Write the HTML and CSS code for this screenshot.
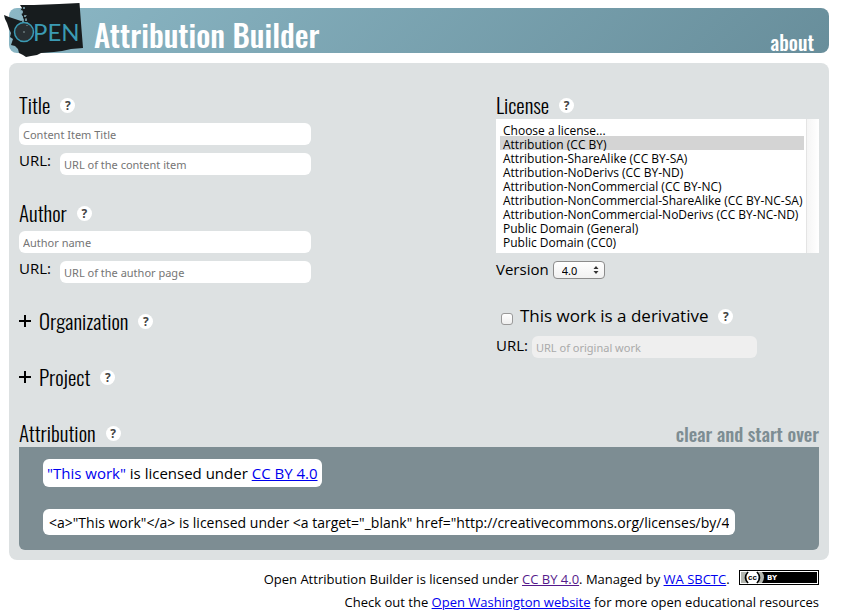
FILE: index.html
```html
<!DOCTYPE html>
<html lang="en">
<head>
<meta charset="utf-8">
<title>Open Attribution Builder</title>
<link rel="stylesheet" href="styles.css">
</head>
<body>
<header class="banner">
  <svg class="logo" viewBox="0 0 80 56" role="img" aria-label="Open Washington">
    <path fill="#171c1e" d="M0 12 L5 14 11 16 17 18 20 17 18 12 16 8 18 5 16 2 30 2 55 1 75.500 0 77 20 79 45 67 46 58 48 50 49 37 50 33 52 27 53 22 54 19 52 15 50 14 46 11 43 7 42 9 36 6 34 7 30 5 26 3 20 1 16Z"/>
    <g fill="#8ab4c2"><circle cx="17" cy="9" r="2"/><circle cx="20" cy="5" r="1"/><circle cx="21" cy="13" r="1"/><circle cx="18" cy="14" r="1"/><circle cx="22" cy="17" r="1"/><circle cx="19" cy="18" r="1"/></g>
    <circle cx="20" cy="29" r="9.500" fill="#293033" stroke="#3b9bb4" stroke-width="1.500"/>
    <circle cx="20" cy="29" r="1" fill="#69777a"/>
    <path d="M22 12v6M23 19v6" stroke="#8b999c" stroke-dasharray="1 2"/>
    <text x="29" y="38" class="logo-text">PEN</text>
  </svg>
  <h1>Attribution Builder</h1>
  <a class="about" href="#about">about</a>
</header>

<main class="panel">
  <form class="columns">
    <div class="left">
      <section class="group">
        <h2><label for="title">Title</label> <button type="button" class="help" aria-label="Help: title">?</button></h2>
        <input class="field" id="title" type="text" placeholder="Content Item Title">
        <div class="url-row"><label for="title-url">URL:</label><input class="field" id="title-url" type="text" placeholder="URL of the content item"></div>
      </section>
      <section class="group">
        <h2><label for="author">Author</label> <button type="button" class="help" aria-label="Help: author">?</button></h2>
        <input class="field" id="author" type="text" placeholder="Author name">
        <div class="url-row"><label for="author-url">URL:</label><input class="field" id="author-url" type="text" placeholder="URL of the author page"></div>
      </section>
      <h2 class="folded"><button type="button" class="expand"><svg class="plus" viewBox="0 0 12 12" aria-hidden="true"><path d="M6 0v12M0 6h12"/></svg>Organization</button> <button type="button" class="help" aria-label="Help: organization">?</button></h2>
      <h2 class="folded"><button type="button" class="expand"><svg class="plus" viewBox="0 0 12 12" aria-hidden="true"><path d="M6 0v12M0 6h12"/></svg>Project</button> <button type="button" class="help" aria-label="Help: project">?</button></h2>
    </div>
    <div class="right">
      <h2><label for="license">License</label> <button type="button" class="help" aria-label="Help: license">?</button></h2>
      <select class="licenses" id="license" size="9">
        <option>Choose a license...</option>
        <option selected>Attribution (CC BY)</option>
        <option>Attribution-ShareAlike (CC BY-SA)</option>
        <option>Attribution-NoDerivs (CC BY-ND)</option>
        <option>Attribution-NonCommercial (CC BY-NC)</option>
        <option>Attribution-NonCommercial-ShareAlike (CC BY-NC-SA)</option>
        <option>Attribution-NonCommercial-NoDerivs (CC BY-NC-ND)</option>
        <option>Public Domain (General)</option>
        <option>Public Domain (CC0)</option>
      </select>
      <div class="version-row">
        <label for="version">Version</label>
        <span class="version-box"><select class="version" id="version"><option>4.0</option><option>3.0</option></select><svg class="arrows" viewBox="0 0 6 8" aria-hidden="true"><path d="M3 0l2.500 3h-5zM3 8l2.500-3h-5z"/></svg></span>
      </div>
      <div class="derivative-row">
        <input type="checkbox" class="check" id="derivative"><label for="derivative">This work is a derivative</label>
        <button type="button" class="help" aria-label="Help: derivative">?</button>
      </div>
      <div class="original-row"><label for="original">URL:</label><input class="field" id="original" type="text" placeholder="URL of original work" disabled></div>
    </div>
  </form>

  <section>
    <div class="result-head">
      <h2>Attribution <button type="button" class="help" aria-label="Help: attribution">?</button></h2>
      <button type="button" class="clear">clear and start over</button>
    </div>
    <div class="result">
      <p class="preview"><span class="work">"This work"</span> is licensed under <a href="#license">CC BY 4.0</a></p>
      <input class="code" type="text" readonly aria-label="Attribution HTML" value='&lt;a&gt;"This work"&lt;/a&gt; is licensed under &lt;a target="_blank" href="http://creativecommons.org/licenses/by/4.0/"&gt;CC BY 4.0&lt;/a&gt;'>
    </div>
  </section>
</main>

<footer class="footer">
  <p>Open Attribution Builder is licensed under <a class="visited" href="#by">CC BY 4.0</a>. Managed by <a href="#sbctc">WA SBCTC</a>.
    <svg class="badge" viewBox="0 0 80 15" role="img" aria-label="Creative Commons BY">
      <rect width="80" height="15"/>
      <rect x="1.500" y="1.500" width="77" height="12" stroke="#fff"/>
      <path fill="#b2b5ae" d="M2 2h21q4 5 0 11H2z"/>
      <circle cx="13.500" cy="7.500" r="6.500" fill="#fff"/>
      <path d="M9 2q-5 5.500 0 11M18 2q5 5.500 0 11" fill="none" stroke="#000" stroke-width="1.500"/>
      <text x="9" y="10" class="badge-cc">cc</text>
      <text x="28" y="10" class="badge-by">BY</text>
    </svg></p>
  <p>Check out the <a href="#ow">Open Washington website</a> for more open educational resources</p>
</footer>
</body>
</html>
```
FILE: styles.css
```css
* { box-sizing: border-box; }

body {
  margin: 0;
  padding: 8px 15px 0 9px;
  background: #fff;
  color: #000;
  font: 15px/22px "Open Sans", "Noto Sans", sans-serif;
}

h1, h2, p { margin: 0; }
a { color: #00e; }
button { padding: 0; border: 0; background: none; color: inherit; font: inherit; }

.banner {
  position: relative;
  display: flex;
  justify-content: space-between;
  align-items: flex-end;
  height: 45px;
  padding: 0 15px 0 85px;
  border-radius: 8px;
  background: linear-gradient(135deg, #8bb7c5, #688e9b);
  color: #fff;
}

.logo { position: absolute; left: -5px; top: -5px; width: 80px; height: 56px; }
.logo-text { fill: #3b9bb4; font: 400 24px Lato, sans-serif; }

h1, h2, .about, .clear { font-family: Oswald, "Liberation Sans Narrow", sans-serif; }
h1 { font-size: 31px; line-height: 38px; font-weight: 500; }
.about { color: #fff; font-size: 20px; line-height: 22px; font-weight: 500; text-decoration: none; }

.panel {
  margin-top: 10px;
  padding: 28px 10px 10px;
  border-radius: 8px;
  background: #dde1e2;
}

.columns { display: grid; grid-template-columns: 292px 323px; justify-content: space-between; }

h2 {
  display: flex;
  align-items: center;
  gap: 10px;
  height: 28px;
  font-size: 21px;
  line-height: 28px;
  font-weight: 300;
}

.help {
  width: 15px;
  height: 15px;
  border-radius: 50%;
  background: #fff;
  color: #444;
  font: 700 12px/15px "Open Sans", sans-serif;
  text-align: center;
}

.group { margin-bottom: 24px; }

.field {
  display: block;
  width: 100%;
  min-width: 0;
  height: 22px;
  padding: 0 4px;
  border: 0;
  border-radius: 6px;
  background: #fff;
  font: 11px "Noto Sans", sans-serif;
}
.group > .field { margin-top: 4px; }
.field::placeholder { color: #757575; opacity: 1; }
.field:disabled { background: #efefef; }
.field:disabled::placeholder { color: #aaa; }

.url-row { display: flex; justify-content: space-between; margin-top: 8px; }
.url-row label { line-height: 14px; }
.url-row .field { width: 251px; }

.folded { margin-bottom: 28px; }
.expand { display: flex; align-items: center; gap: 8px; }
.plus { width: 12px; height: 12px; fill: none; stroke: #000; stroke-width: 2; }

.licenses {
  display: block;
  width: 100%;
  height: 134px;
  padding: 3px 15px 4px 4px;
  border: 0;
  border-radius: 0;
  overflow: hidden;
  background: linear-gradient(to right, #e4e4e4 1px, #f5f5f5 1px, #fff) right / 13px 100% no-repeat #fff;
  color: #000;
  font: 12px/14px "Open Sans", "Noto Sans", sans-serif;
}
.licenses option { height: 14px; min-height: 14px; padding: 0 3px; color: #000; line-height: 14px; }
.licenses option:checked { background: linear-gradient(#d4d4d4, #d4d4d4); color: #000; }

.version-row { display: flex; gap: 4px; margin-top: 8px; line-height: 16px; }
.version-box { position: relative; width: 52px; height: 18px; }
.version {
  display: block;
  width: 100%;
  height: 18px;
  padding: 0 8px;
  appearance: none;
  border: 1px solid #8c8c8c;
  border-radius: 4px;
  background: linear-gradient(#fff, #f1f1f1);
  font: 11px "Noto Sans", sans-serif;
}
.arrows { position: absolute; right: 6px; top: 5px; width: 6px; height: 8px; pointer-events: none; fill: #333; }

.derivative-row { display: flex; align-items: center; margin-top: 25px; font-size: 17px; line-height: 24px; }
.derivative-row .help { margin-left: 10px; }
.check {
  width: 12px;
  height: 12px;
  margin: 6px 7px 0 5px;
  appearance: none;
  border: 1px solid #999;
  border-radius: 3px;
  background: linear-gradient(#fff, #eee);
}
.original-row { display: flex; gap: 4px; margin-top: 8px; }
.original-row label { line-height: 18px; }
.original-row .field { width: 225px; }

.result-head { display: flex; justify-content: space-between; }
.clear { color: #7d8d93; font-size: 19px; line-height: 28px; font-weight: 500; }
.result {
  display: flex;
  flex-direction: column;
  align-items: flex-start;
  gap: 22px;
  padding: 12px 24px 15px;
  border-radius: 0 0 6px 6px;
  background: #7d8d93;
}
.preview { padding: 3px 4px; border-radius: 6px; background: #fff; }
.work { color: #00e; }
.code {
  width: 92%;
  height: 26px;
  padding: 0 6px;
  border: 0;
  border-radius: 6px;
  background: #fff;
  color: #000;
  font: 14px "Open Sans", "Noto Sans", sans-serif;
}

.footer { padding: 8px 10px 0; font-size: 13px; line-height: 23px; text-align: right; }
.footer .visited { color: #551a8b; }
.badge { width: 80px; height: 15px; margin-left: 6px; vertical-align: -1px; }
.badge-cc { font: 700 8px "Liberation Sans", sans-serif; }
.badge-by { fill: #fff; font: 700 7px "DejaVu Sans", sans-serif; }
```
